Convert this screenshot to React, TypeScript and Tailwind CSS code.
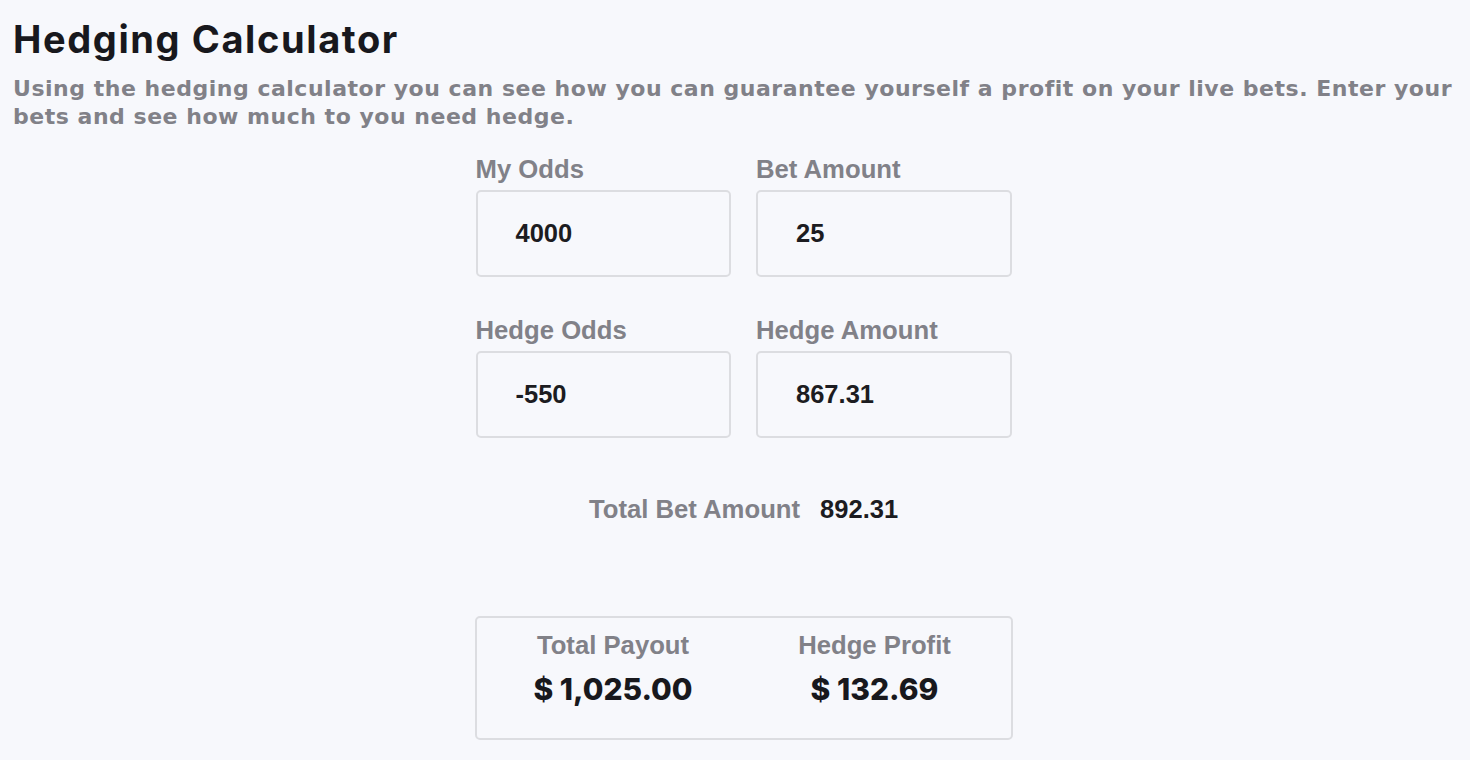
import React from "react";

type Field = {
  label: string;
  value: string;
};

const fields: Field[] = [
  { label: "My Odds", value: "4000" },
  { label: "Bet Amount", value: "25" },
  { label: "Hedge Odds", value: "-550" },
  { label: "Hedge Amount", value: "867.31" },
];

const labelCls =
  "font-['Liberation_Sans',Arial,sans-serif] font-bold text-[25.7px] leading-[28px] text-[#818188]";
const valueCls =
  "font-['Liberation_Sans',Arial,sans-serif] font-bold text-[25.5px] leading-[28px] text-[#1c1c21]";
const displayCls = "font-['Inter','Noto_Sans',sans-serif]";

function InputBox({ field }: { field: Field }) {
  return (
    <div className="flex flex-col">
      <label className={labelCls}>{field.label}</label>
      <div className="mt-[7px] h-[87px] flex items-center rounded-[5px] border-2 border-[#dcdde1] bg-[#f7f8fc] pl-[38px] pb-[2px]">
        <span className={valueCls}>{field.value}</span>
      </div>
    </div>
  );
}

export default function App() {
  return (
    <div className="min-h-screen bg-[#f7f8fc] text-[#1c1c21]">
      <div className="px-[13px] pt-[20px]">
        <h1 className={`${displayCls} font-bold text-[38px] leading-[38px] tracking-[1.6px] text-[#18181d]`}>
          Hedging Calculator
        </h1>
        <p className="mt-[17px] font-['DejaVu_Sans',sans-serif] font-bold text-[22px] leading-[28px] tracking-[0.52px] text-[#818188]">
          Using the hedging calculator you can see how you can guarantee yourself a profit on your live bets. Enter your
          <br />
          bets and see how much to you need hedge.
        </p>
      </div>

      <div className="flex justify-center pl-[17px] pt-[24px]">
        <div className="flex w-[538px] flex-col items-center">
          <div className="grid w-[536px] grid-cols-2 gap-x-[25px] gap-y-[39px]">
            {fields.map((f) => (
              <InputBox key={f.label} field={f} />
            ))}
          </div>

          <div className="mt-[57px] flex items-center gap-[20px]">
            <span className={labelCls}>Total Bet Amount</span>
            <span className={valueCls}>892.31</span>
          </div>

          <div className="mt-[93px] grid w-[538px] grid-cols-2 rounded-[5px] border-2 border-[#dcdde1] pt-[13px] pb-[31px]">
            <div className="flex flex-col items-center pl-[6px]">
              <span className={labelCls}>Total Payout</span>
              <span className={`${displayCls} mt-[12px] font-extrabold text-[30px] leading-[36px] text-[#18181d]`}>
                $ 1,025.00
              </span>
            </div>
            <div className="flex flex-col items-center pr-[5px]">
              <span className={labelCls}>Hedge Profit</span>
              <span className={`${displayCls} mt-[12px] font-extrabold text-[30px] leading-[36px] text-[#18181d]`}>
                $ 132.69
              </span>
            </div>
          </div>
        </div>
      </div>
    </div>
  );
}
